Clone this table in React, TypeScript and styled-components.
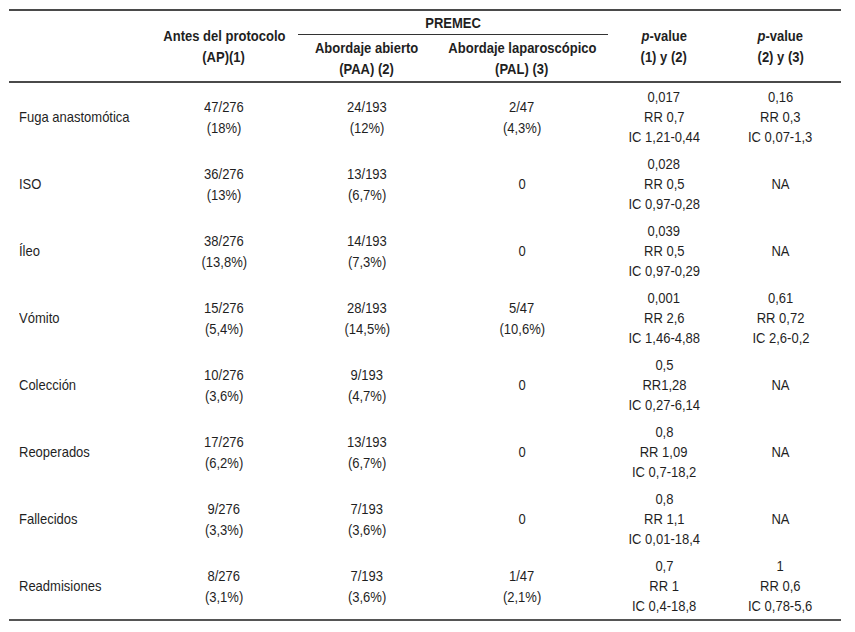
import React from 'react';
import styled, { createGlobalStyle } from 'styled-components';

const Global = createGlobalStyle`
  html, body { margin: 0; padding: 0; background: #ffffff; }
  body { font-family: "Liberation Sans", Arial, sans-serif; color: #1f1f1f; }
`;

const Page = styled.div`
  padding: 9px 0 0 9px;
`;

const Table = styled.table`
  width: 832px;
  table-layout: fixed;
  border-collapse: collapse;
  font-family: "Liberation Sans", Arial, sans-serif;
  font-size: 15px;
  color: #1f1f1f;
  border-top: 2px solid #4a4a4a;
  border-bottom: 2px solid #555555;
`;

const Head = styled.thead`
  border-bottom: 2px solid #4a4a4a;
`;

const HeadCell = styled.th<{ $h?: number; $rule?: boolean }>`
  padding: 0;
  font-weight: bold;
  text-align: center;
  vertical-align: middle;
  line-height: 21px;
  height: ${p => (p.$h ? `${p.$h}px` : 'auto')};
  border-bottom: ${p => (p.$rule ? '1px solid #333' : 'none')};
`;

const Label = styled.td`
  padding: 0 0 0 10px;
  height: 67px;
  vertical-align: middle;
  text-align: left;
  line-height: 20px;
`;

const Value = styled.td<{ $lh: number }>`
  padding: 0;
  height: 67px;
  vertical-align: middle;
  text-align: center;
  line-height: ${p => p.$lh}px;
`;

const Line = styled.div`
  white-space: nowrap;
`;

/* the source glyphs are horizontally condensed (Arial 13px wide, 15px tall) */
const Condensed = styled.span<{ $origin?: string }>`
  display: inline-block;
  white-space: nowrap;
  transform: scaleX(0.867);
  transform-origin: ${p => p.$origin ?? 'center'} center;
`;

type Row = {
  label: string;
  ap: string[];
  paa: string[];
  pal: string[];
  p12: string[];
  p23: string[];
};

const rows: Row[] = [
  { label: 'Fuga anastomótica', ap: ['47/276', '(18%)'], paa: ['24/193', '(12%)'], pal: ['2/47', '(4,3%)'], p12: ['0,017', 'RR 0,7', 'IC 1,21-0,44'], p23: ['0,16', 'RR 0,3', 'IC 0,07-1,3'] },
  { label: 'ISO', ap: ['36/276', '(13%)'], paa: ['13/193', '(6,7%)'], pal: ['0'], p12: ['0,028', 'RR 0,5', 'IC 0,97-0,28'], p23: ['NA'] },
  { label: 'Íleo', ap: ['38/276', '(13,8%)'], paa: ['14/193', '(7,3%)'], pal: ['0'], p12: ['0,039', 'RR 0,5', 'IC 0,97-0,29'], p23: ['NA'] },
  { label: 'Vómito', ap: ['15/276', '(5,4%)'], paa: ['28/193', '(14,5%)'], pal: ['5/47', '(10,6%)'], p12: ['0,001', 'RR 2,6', 'IC 1,46-4,88'], p23: ['0,61', 'RR 0,72', 'IC 2,6-0,2'] },
  { label: 'Colección', ap: ['10/276', '(3,6%)'], paa: ['9/193', '(4,7%)'], pal: ['0'], p12: ['0,5', 'RR1,28', 'IC 0,27-6,14'], p23: ['NA'] },
  { label: 'Reoperados', ap: ['17/276', '(6,2%)'], paa: ['13/193', '(6,7%)'], pal: ['0'], p12: ['0,8', 'RR 1,09', 'IC 0,7-18,2'], p23: ['NA'] },
  { label: 'Fallecidos', ap: ['9/276', '(3,3%)'], paa: ['7/193', '(3,6%)'], pal: ['0'], p12: ['0,8', 'RR 1,1', 'IC 0,01-18,4'], p23: ['NA'] },
  { label: 'Readmisiones', ap: ['8/276', '(3,1%)'], paa: ['7/193', '(3,6%)'], pal: ['1/47', '(2,1%)'], p12: ['0,7', 'RR 1', 'IC 0,4-18,8'], p23: ['1', 'RR 0,6', 'IC 0,78-5,6'] },
];

const Cell = ({ lines }: { lines: string[] }) => (
  <Value $lh={lines.length >= 3 ? 20 : 21}>
    {lines.map((l, i) => (
      <Line key={i}>
        <Condensed>{l}</Condensed>
      </Line>
    ))}
  </Value>
);

const HeadLines = ({ lines }: { lines: React.ReactNode[] }) => (
  <>
    {lines.map((l, i) => (
      <Line key={i}>
        <Condensed>{l}</Condensed>
      </Line>
    ))}
  </>
);

const pLabel = (
  <>
    <i>p</i>-value
  </>
);

export default function App() {
  return (
    <>
      <Global />
      <Page>
        <Table>
          <colgroup>
            <col style={{ width: 141 }} />
            <col style={{ width: 148 }} />
            <col style={{ width: 138 }} />
            <col style={{ width: 172 }} />
            <col style={{ width: 112 }} />
            <col style={{ width: 121 }} />
          </colgroup>
          <Head>
            <tr>
              <HeadCell rowSpan={2} />
              <HeadCell rowSpan={2}>
                <HeadLines lines={['Antes del protocolo', '(AP)(1)']} />
              </HeadCell>
              <HeadCell colSpan={2} $h={23} $rule>
                <HeadLines lines={['PREMEC']} />
              </HeadCell>
              <HeadCell rowSpan={2}>
                <HeadLines lines={[pLabel, '(1) y (2)']} />
              </HeadCell>
              <HeadCell rowSpan={2}>
                <HeadLines lines={[pLabel, '(2) y (3)']} />
              </HeadCell>
            </tr>
            <tr>
              <HeadCell $h={46}>
                <HeadLines lines={['Abordaje abierto', '(PAA) (2)']} />
              </HeadCell>
              <HeadCell $h={46}>
                <HeadLines lines={['Abordaje laparoscópico', '(PAL) (3)']} />
              </HeadCell>
            </tr>
          </Head>
          <tbody>
            {rows.map(r => (
              <tr key={r.label}>
                <Label>
                  <Condensed $origin="left">{r.label}</Condensed>
                </Label>
                <Cell lines={r.ap} />
                <Cell lines={r.paa} />
                <Cell lines={r.pal} />
                <Cell lines={r.p12} />
                <Cell lines={r.p23} />
              </tr>
            ))}
          </tbody>
        </Table>
      </Page>
    </>
  );
}
